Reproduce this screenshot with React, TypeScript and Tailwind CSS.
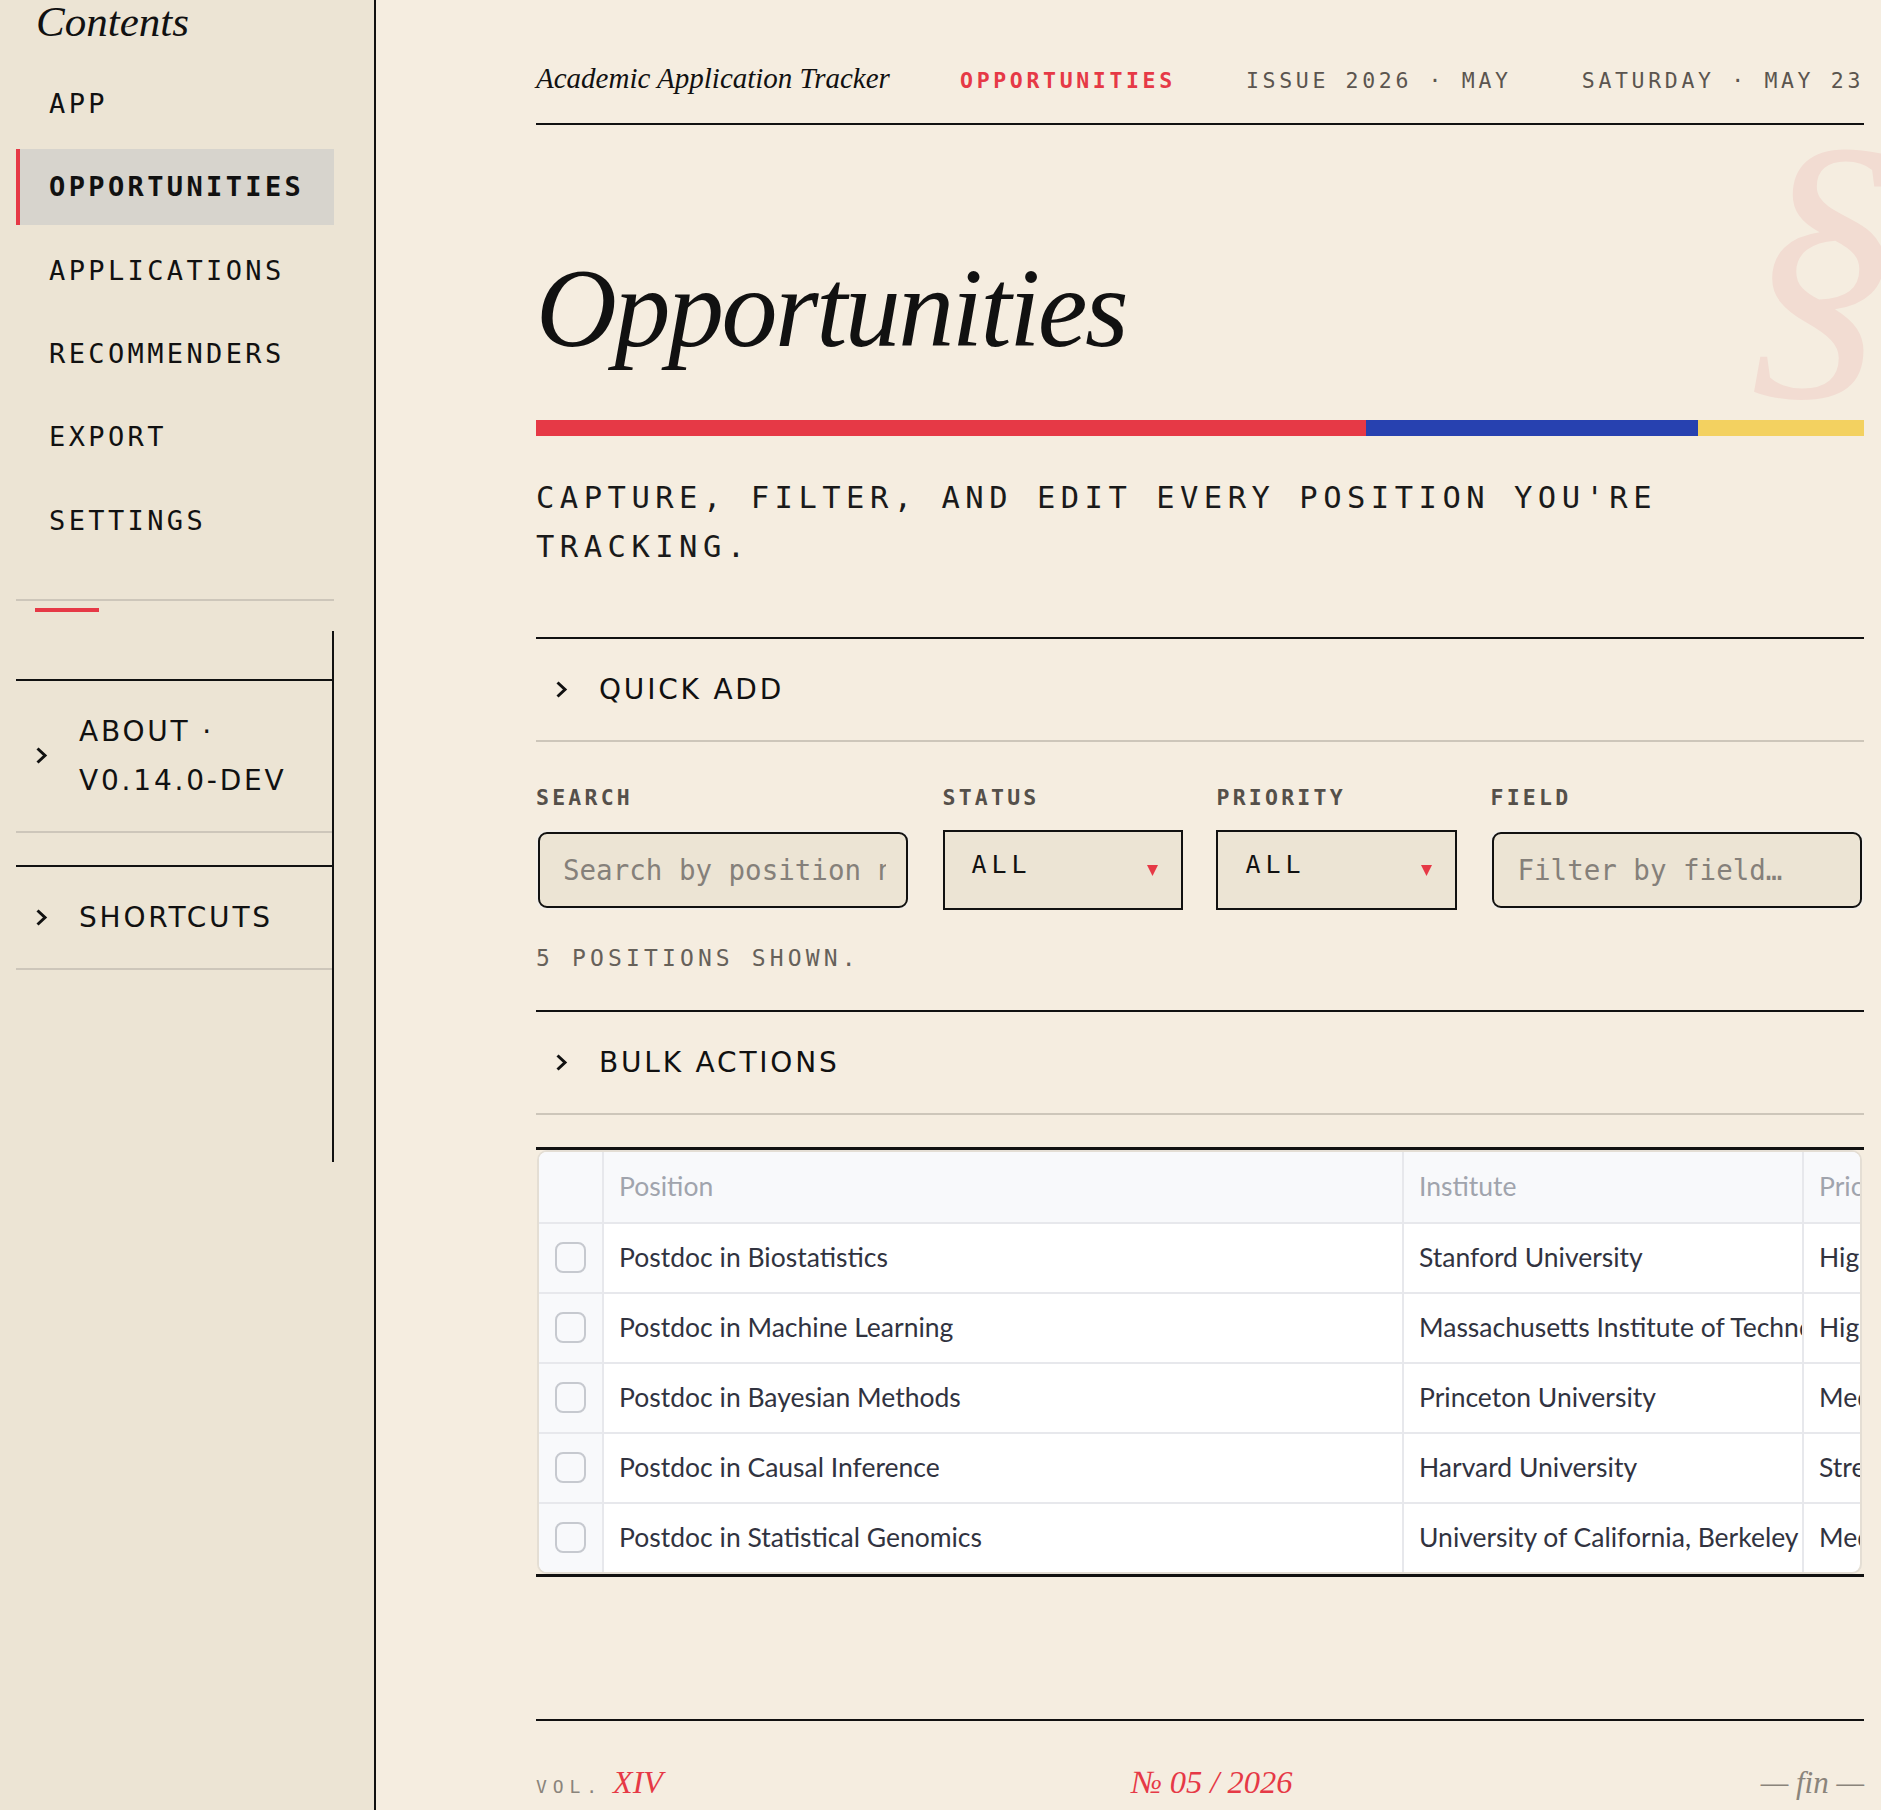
import React from 'react'

const navItems = ['APP', 'OPPORTUNITIES', 'APPLICATIONS', 'RECOMMENDERS', 'EXPORT', 'SETTINGS']

const rows = [
  { position: 'Postdoc in Biostatistics', institute: 'Stanford University', priority: 'High' },
  { position: 'Postdoc in Machine Learning', institute: 'Massachusetts Institute of Technology', priority: 'High' },
  { position: 'Postdoc in Bayesian Methods', institute: 'Princeton University', priority: 'Medium' },
  { position: 'Postdoc in Causal Inference', institute: 'Harvard University', priority: 'Stretch' },
  { position: 'Postdoc in Statistical Genomics', institute: 'University of California, Berkeley', priority: 'Medium' },
]

const Chevron = () => (
  <svg width="13" height="19" viewBox="0 0 13 19" fill="none" className="shrink-0">
    <path d="M2.5 2.5L10 9.5L2.5 16.5" stroke="#111111" strokeWidth="3" />
  </svg>
)

const Expander = ({ label }: { label: string }) => (
  <div className="flex items-center gap-[31px] border-t-2 border-b-2 border-t-[#111] border-b-[#cdc6ba] py-[26px] pl-[19px]">
    <Chevron />
    <span className="font-['DejaVu_Sans',sans-serif] text-[28px] leading-[49px] tracking-[0.1em] text-[#111]">
      {label}
    </span>
  </div>
)

const FilterLabel = ({ children }: { children: React.ReactNode }) => (
  <div className="mb-[21px] font-['DejaVu_Sans_Mono',monospace] text-[21.5px] leading-none font-bold tracking-[0.15em] text-[#55504a]">
    {children}
  </div>
)

const TextInput = ({ placeholder }: { placeholder: string }) => (
  <div className="h-[80px] rounded-[11px] border-2 border-[#f2eee8]">
    <input
      type="text"
      placeholder={placeholder}
      className="h-full w-full rounded-[9px] border-2 border-[#111] bg-[#ece4d4] pl-[23px] pr-[20px] font-['DejaVu_Sans_Mono',monospace] text-[27.5px] outline-none placeholder:text-[#85807a]"
    />
  </div>
)

const Select = ({ value }: { value: string }) => (
  <div className="flex h-[80px] items-start justify-between border-2 border-[#111] bg-[#ece4d4] pl-[27px] pr-[23px]">
    <span className="mt-[20px] font-['DejaVu_Sans_Mono',monospace] text-[25px] leading-none tracking-[0.2em] text-[#111]">
      {value}
    </span>
    <svg className="mt-[33px]" width="11" height="11" viewBox="0 0 11 11">
      <path d="M0 0H11L5.5 11Z" fill="#e63946" />
    </svg>
  </div>
)

const Checkbox = () => <div className="h-[31px] w-[31px] rounded-[8px] border-2 border-[#c6c9cf]" />

const PositionsTable = () => (
  <div className="mt-[32px] border-y-[3px] border-[#111]">
    <div className="ml-px mr-[2px] overflow-hidden rounded-[10px] border-2 border-[#e4ded4] bg-white font-['Lato',sans-serif] text-[26.5px] text-[#31333f]">
      <div className="flex h-[72px] border-b-2 border-[#e7e8ec] bg-[#f8f9fb] text-[#a0a4ad]">
        <div className="w-[65px] shrink-0 border-r-2 border-[#e7e8ec]" />
        <div className="flex w-[800px] shrink-0 items-center border-r-2 border-[#e7e8ec] pl-[15px]">Position</div>
        <div className="flex w-[400px] shrink-0 items-center border-r-2 border-[#e7e8ec] pl-[15px]">Institute</div>
        <div className="flex w-[200px] shrink-0 items-center pl-[15px]">Priority</div>
      </div>
      {rows.map((r, i) => (
        <div
          key={r.position}
          className={
            i < rows.length - 1
              ? 'flex h-[70px] border-b-2 border-[#e7e8ec]'
              : 'flex h-[68px]'
          }
        >
          <div className="flex w-[65px] shrink-0 items-center justify-center border-r-2 border-[#e7e8ec] bg-[#f8f9fb]">
            <Checkbox />
          </div>
          <div className="flex w-[800px] shrink-0 items-center overflow-hidden whitespace-nowrap border-r-2 border-[#e7e8ec] pl-[15px] pr-[3px]">
            {r.position}
          </div>
          <div className="flex w-[400px] shrink-0 items-center overflow-hidden whitespace-nowrap border-r-2 border-[#e7e8ec] pl-[15px] pr-[3px]">
            {r.institute}
          </div>
          <div className="flex w-[200px] shrink-0 items-center whitespace-nowrap pl-[15px]">{r.priority}</div>
        </div>
      ))}
    </div>
  </div>
)

const Sidebar = () => (
  <aside className="w-[376px] shrink-0 border-r-2 border-[#111] bg-[#ece4d4] pl-4 pr-[40px] text-[#111]">
    <div className="pl-[20px] font-['Liberation_Serif',serif] text-[43px] leading-none italic">Contents</div>

    <nav className="mt-[23px] flex flex-col gap-[7.4px]">
      {navItems.map((item) => (
        <div
          key={item}
          className={
            item === 'OPPORTUNITIES'
              ? "flex h-[76px] items-center border-l-4 border-[#e63946] bg-[#d7d4cd] pl-[29px] font-['DejaVu_Sans_Mono',monospace] text-[27px] font-bold tracking-[0.125em]"
              : "flex h-[76px] items-center border-l-4 border-transparent pl-[29px] font-['DejaVu_Sans_Mono',monospace] text-[27px] tracking-[0.125em]"
          }
        >
          {item}
        </div>
      ))}
    </nav>

    <div className="mt-[40px] h-[2px] bg-[#cdc6ba]" />
    <div className="mt-[7px] ml-[19px] h-[4px] w-[64px] bg-[#e63946]" />

    <div className="mt-[19px] flex h-[531px] flex-col gap-[32px] border-r-2 border-[#111] pt-[48px]">
      <Expander label="ABOUT · V0.14.0-DEV" />
      <Expander label="SHORTCUTS" />
    </div>
  </aside>
)

export default function App() {
  return (
    <div className="flex h-[1810px] w-full overflow-hidden bg-[#f5ede0] text-[#111]">
      <Sidebar />

      <main className="relative flex-1 overflow-hidden pl-[160px] pr-[17px]">
        {/* section mark in the top right corner */}
        <div className="pointer-events-none absolute left-[1368px] top-[100px] font-['Liberation_Serif',serif] text-[312px] leading-none italic text-[#f2dcd2] select-none">
          §
        </div>

        <div className="relative">
          <header className="flex items-baseline justify-between border-b-2 border-[#111] pt-[64px] pb-[30px]">
            <span className="font-['Liberation_Serif',serif] text-[29px] leading-none italic">Academic Application Tracker</span>
            <span className="font-['DejaVu_Sans_Mono',monospace] text-[21.5px] leading-none font-bold tracking-[0.17em] text-[#e63946]">
              OPPORTUNITIES
            </span>
            <span className="font-['DejaVu_Sans_Mono',monospace] text-[21.5px] leading-none tracking-[0.17em] text-[#5b554f]">
              ISSUE 2026 · MAY
            </span>
            <span className="font-['DejaVu_Sans_Mono',monospace] text-[21.5px] leading-none tracking-[0.17em] text-[#5b554f]">
              SATURDAY · MAY 23
            </span>
          </header>

          <h1 className="mt-[127px] font-['Liberation_Serif',serif] text-[112px] leading-none tracking-[-0.022em] italic">
            Opportunities
          </h1>

          <div className="mt-[56px] flex h-4">
            <div className="w-[62.5%] bg-[#e63946]" />
            <div className="w-1/4 bg-[#2741b0]" />
            <div className="flex-1 bg-[#f3d160]" />
          </div>

          <p className="mt-[37px] font-['DejaVu_Sans_Mono',monospace] text-[30.5px] leading-[49px] tracking-[0.18em] text-[#1a1a1a]">
            CAPTURE, FILTER, AND EDIT EVERY POSITION YOU'RE TRACKING.
          </p>

          <div className="mt-[66px]">
            <Expander label="QUICK ADD" />
          </div>

          <div className="mt-[45px] grid grid-cols-[1.55fr_1fr_1fr_1.55fr] gap-x-[33px]">
            <div>
              <FilterLabel>SEARCH</FilterLabel>
              <TextInput placeholder="Search by position name or institute…" />
            </div>
            <div>
              <FilterLabel>STATUS</FilterLabel>
              <Select value="ALL" />
            </div>
            <div>
              <FilterLabel>PRIORITY</FilterLabel>
              <Select value="ALL" />
            </div>
            <div>
              <FilterLabel>FIELD</FilterLabel>
              <TextInput placeholder="Filter by field…" />
            </div>
          </div>

          <div className="mt-[37px] font-['DejaVu_Sans_Mono',monospace] text-[23px] leading-none tracking-[0.18em] text-[#66615a]">
            5 POSITIONS SHOWN.
          </div>

          <div className="mt-[40px]">
            <Expander label="BULK ACTIONS" />
          </div>

          <PositionsTable />

          <footer className="mt-[142px] flex items-baseline justify-between border-t-2 border-[#111] pt-[45px]">
            <div className="flex items-baseline gap-[10px]">
              <span className="font-['DejaVu_Sans_Mono',monospace] text-[18px] leading-none tracking-[0.33em] text-[#8a847b]">VOL.</span>
              <span className="font-['Liberation_Serif',serif] text-[32px] leading-none italic text-[#e63946]">XIV</span>
            </div>
            <span className="font-['Liberation_Serif',serif] text-[32.5px] leading-none italic text-[#e63946]">№ 05 / 2026</span>
            <span className="font-['Liberation_Serif',serif] text-[31px] leading-none italic text-[#8a847b]">— fin —</span>
          </footer>
        </div>
      </main>
    </div>
  )
}
